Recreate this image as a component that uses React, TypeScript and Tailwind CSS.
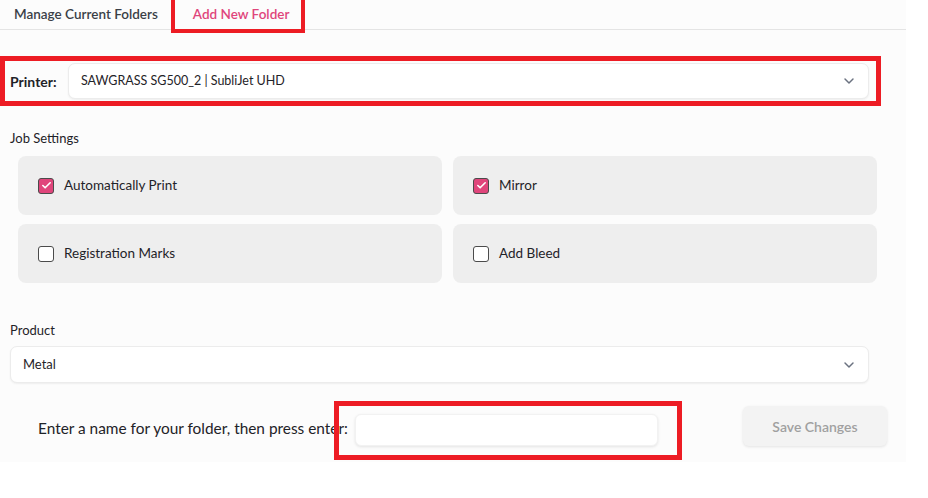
import { ChevronDown, Check } from "lucide-react";

type Opt = { label: string; checked: boolean };

const options: Opt[] = [
  { label: "Automatically Print", checked: true },
  { label: "Mirror", checked: true },
  { label: "Registration Marks", checked: false },
  { label: "Add Bleed", checked: false },
];

function Box({ checked }: { checked: boolean }) {
  return (
    <span
      className={`flex h-[16px] w-[16px] items-center justify-center rounded-[3px] border-[1.5px] border-[#4b4b4b] ${
        checked ? "bg-[#e0457b]" : "bg-white"
      }`}
    >
      {checked && <Check size={11} strokeWidth={3.5} className="text-white" />}
    </span>
  );
}

function Select({ value, className, textClass }: { value: string; className: string; textClass: string }) {
  return (
    <div
      className={`flex items-center justify-between rounded-[7px] border border-[#ececec] bg-white shadow-[0_1px_2px_rgba(0,0,0,0.06)] ${className}`}
    >
      <span className={`text-[#1f2328] ${textClass}`}>{value}</span>
      <ChevronDown size={16} strokeWidth={2.2} className="mr-[11px] text-[#6b7280]" />
    </div>
  );
}

export default function App() {
  return (
    <div
      className="relative h-[498px] w-[928px] bg-white"
      style={{ fontFamily: "Lato, 'Noto Sans', sans-serif" }}
    >
      <div className="h-[462px] w-[906px] bg-[#fcfcfc]">
        <div className="flex h-[30px] items-center border-b border-[#e4e4e4] text-[13.5px] font-semibold">
          <span className="pl-[14px] text-[#3a3f47]">Manage Current Folders</span>
          <span className="pl-[35px] text-[#e0457b]">Add New Folder</span>
        </div>

        <div className="mt-[33px] flex items-center">
          <span className="w-[68px] pl-[10px] text-[14px] font-bold text-[#1f2328]">Printer:</span>
          <Select
            value="SAWGRASS SG500_2 | SubliJet UHD"
            className="h-[36px] w-[801px] pl-[12px]"
            textClass="text-[12.5px]"
          />
        </div>

        <div className="mt-[30px] pl-[10px] text-[13px] leading-[18px] text-[#1f2328]">Job Settings</div>

        <div className="mt-[9px] grid w-[877px] grid-cols-2 gap-x-[11px] gap-y-[9px] pl-[18px]">
          {options.map((o) => (
            <div
              key={o.label}
              className="flex h-[59px] items-center gap-[10px] rounded-[8px] bg-[#eeeeee] pl-[20px]"
            >
              <Box checked={o.checked} />
              <span className="text-[13.5px] text-[#1f2328]">{o.label}</span>
            </div>
          ))}
        </div>

        <div className="mt-[38px] pl-[10px] text-[13px] leading-[18px] text-[#1f2328]">Product</div>
        <div className="mt-[7px] pl-[10px]">
          <Select value="Metal" className="h-[37px] w-[859px] pl-[12px]" textClass="text-[13px]" />
        </div>

        <div className="mt-[23px] flex items-end">
          <span className="mb-[6px] w-[355px] whitespace-nowrap pl-[38px] text-[15.4px] text-[#1f2328]">
            Enter a name for your folder, then press enter:
          </span>
          <div className="h-[32px] w-[303px] rounded-[6px] border border-[#f2f2f2] bg-white shadow-[0_1px_3px_rgba(0,0,0,0.1)]" />
          <button className="ml-[85px] h-[40px] w-[144px] rounded-[6px] bg-[#f3f3f3] text-[14px] font-semibold text-[#a0a0a0] shadow-[0_1px_3px_rgba(0,0,0,0.1)]">
            Save Changes
          </button>
        </div>
      </div>

      {/* annotation boxes */}
      <div className="absolute left-[171px] top-[-4px] h-[37px] w-[134px] border-[4px] border-[#ed1c24]" />
      <div className="absolute left-0 top-[56px] h-[50px] w-[881px] border-[5px] border-[#ed1c24]" />
      <div className="absolute left-[334px] top-[401px] h-[59px] w-[348px] border-[5px] border-[#ed1c24]" />
    </div>
  );
}
